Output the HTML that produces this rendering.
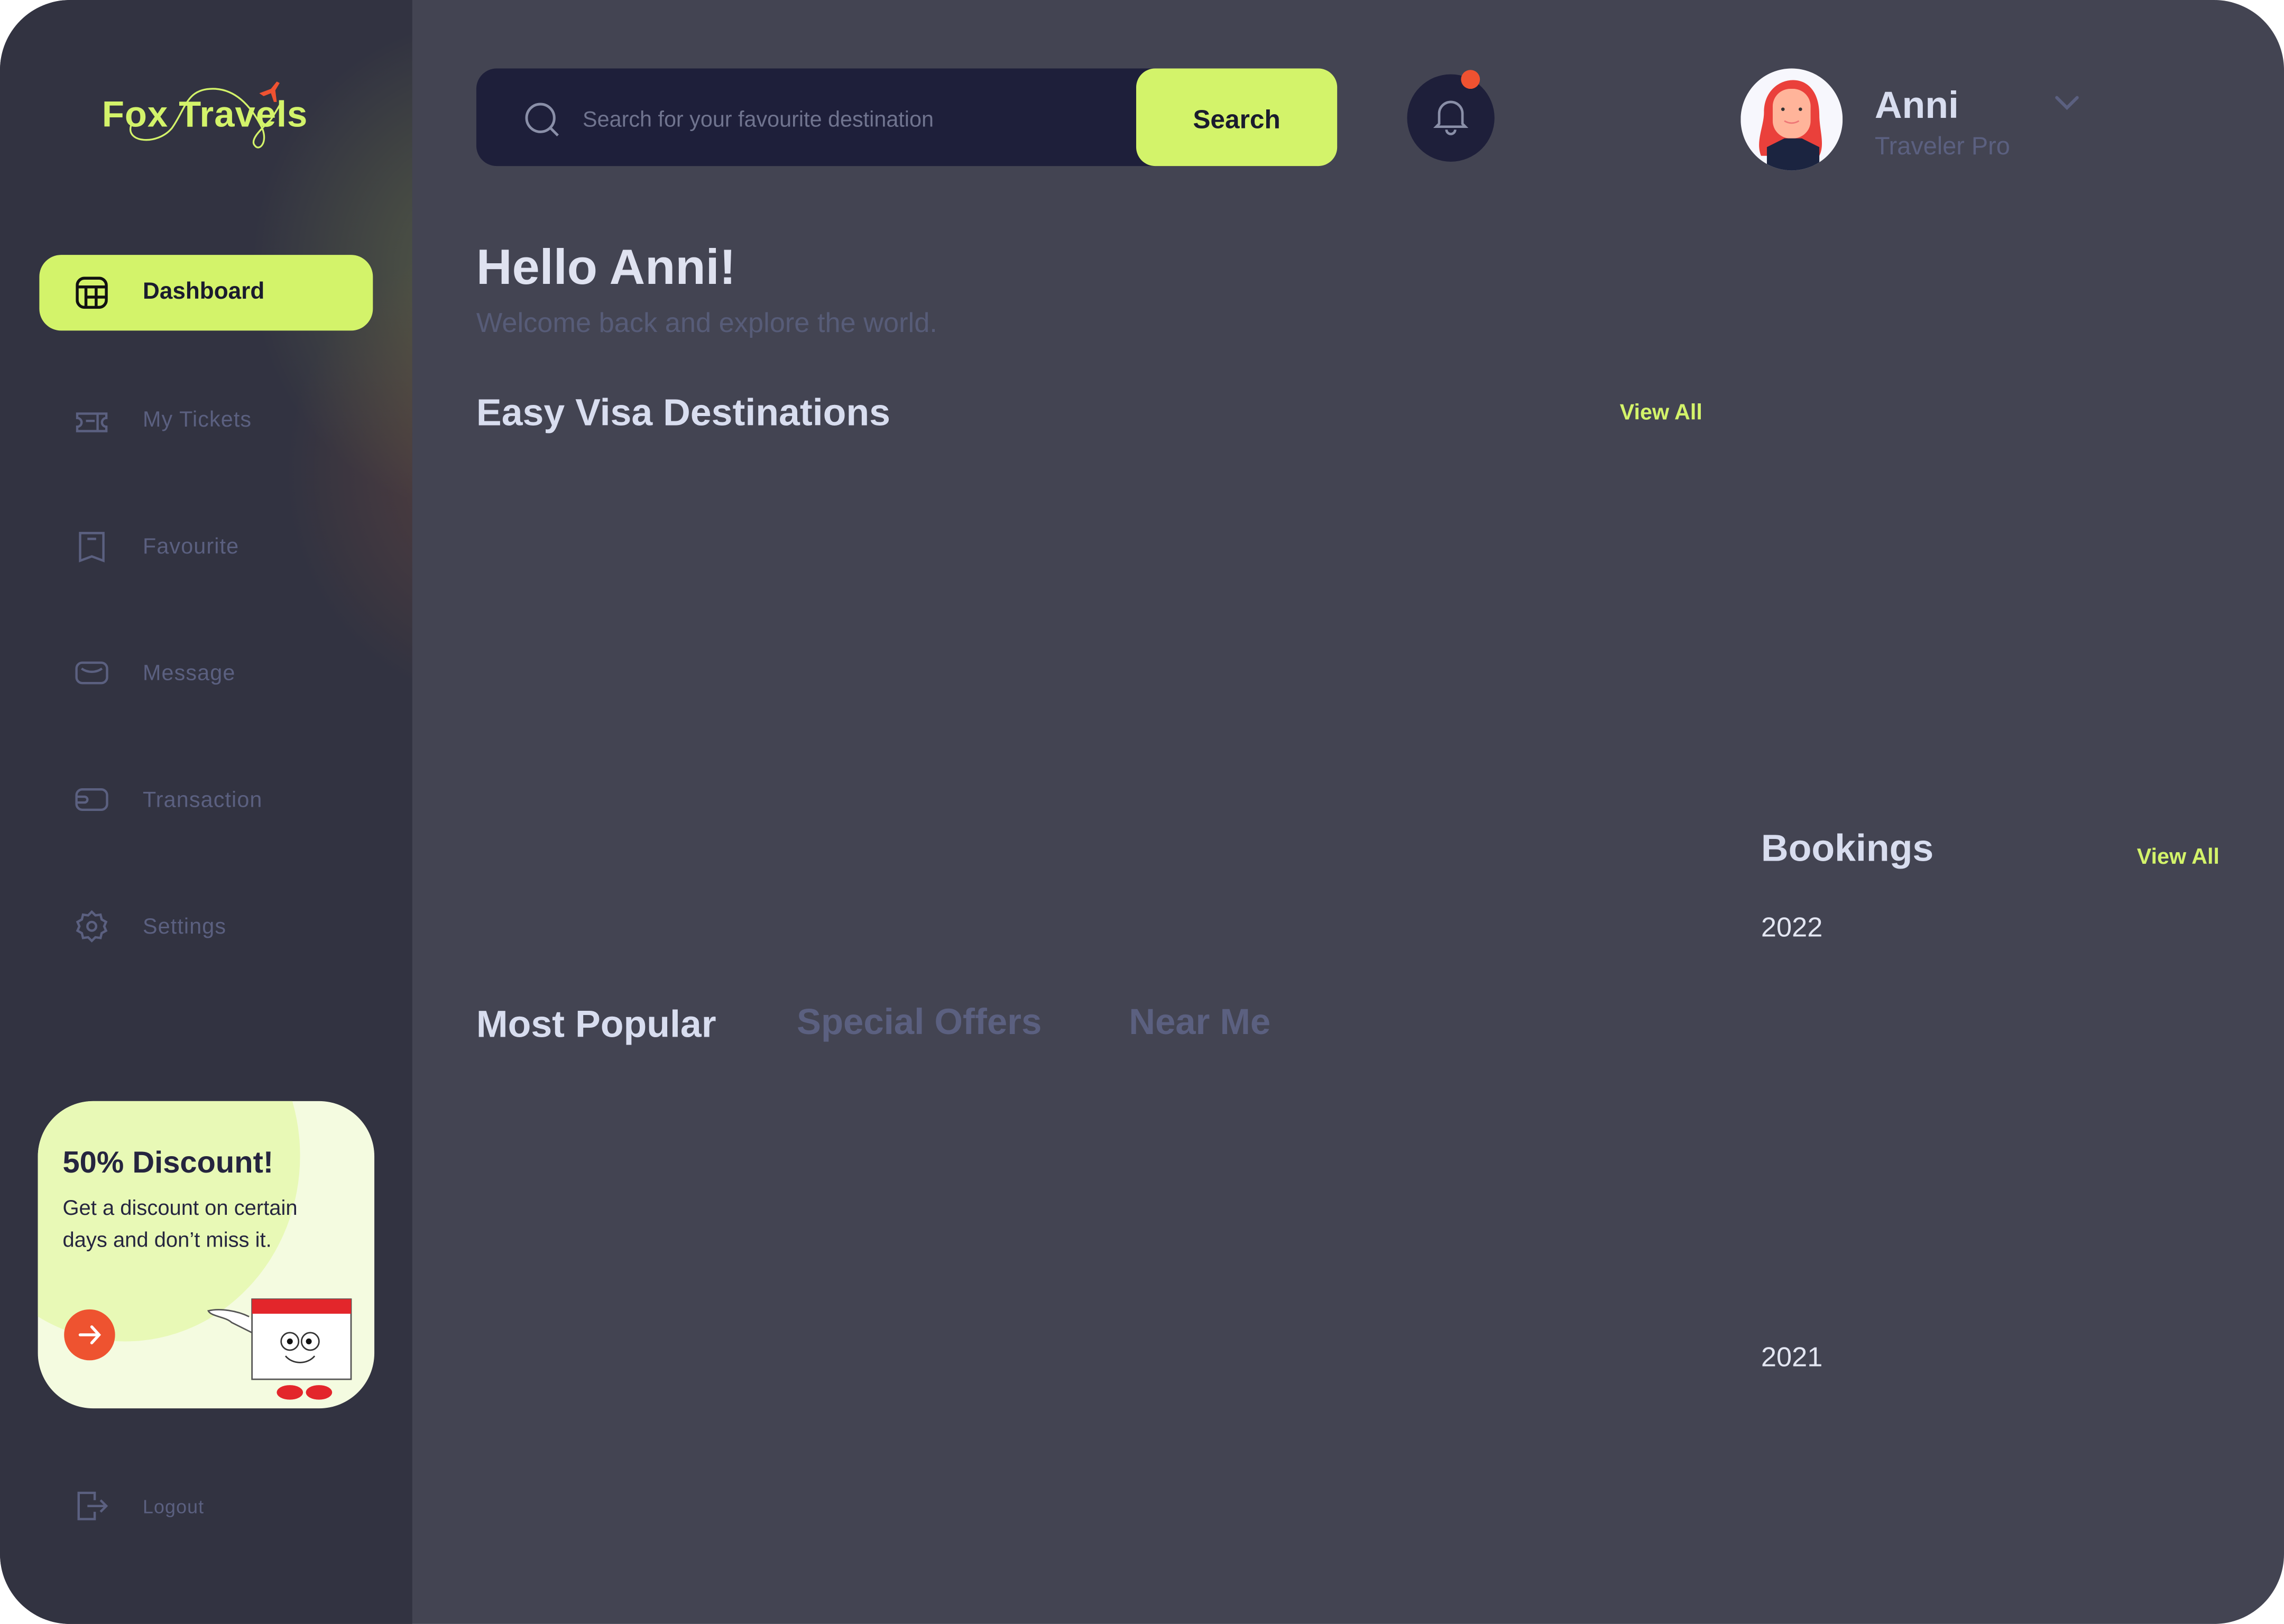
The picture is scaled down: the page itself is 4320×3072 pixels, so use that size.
<!DOCTYPE html>
<html><head><meta charset="utf-8"><style>
html,body{margin:0;padding:0;background:#fff;width:4320px;height:3072px;overflow:hidden}
#s{position:absolute;left:0;top:0;width:1568px;height:1115px;transform:scale(2.75510);transform-origin:0 0;font-family:"Liberation Sans",sans-serif}
.app{position:absolute;left:0;top:0;width:1568px;height:1115px;border-radius:48px;overflow:hidden;background:#434452}
.side{position:absolute;left:0;top:0;width:283px;height:1115px;background:#323341;overflow:hidden}
.glow{position:absolute;left:60px;top:-60px;width:440px;height:640px;background:radial-gradient(ellipse 160px 170px at 62% 38%,rgba(180,200,80,.26),rgba(0,0,0,0)),radial-gradient(ellipse 150px 160px at 65% 60%,rgba(200,100,50,.24),rgba(0,0,0,0))}
.t{position:absolute;white-space:nowrap}
.mi{position:absolute;left:98px;font-size:15px;color:#5b6080;letter-spacing:.4px}
.ic{position:absolute;left:51px;width:24px;height:24px}
</style></head><body><div id="s"><div class="app">
<div class="side"><div class="glow"></div>
<svg style="position:absolute;left:68px;top:56px" width="160" height="50" viewBox="0 0 160 50">
<path d="M22 30 C18 42 40 44 50 32 C60 18 60 4 80 5 C95 6 105 18 112 32 C116 42 110 48 107 44 C103 40 112 32 118 26 C122 20 124 16 126 13" fill="none" stroke="#d3f36a" stroke-width="1.2"/>
<text x="2" y="31" font-family="Liberation Sans" font-weight="700" font-size="25" textLength="141" fill="#d3f36a">Fox Travels</text>
<path d="M110 8 l8 -3 l4 -5 l2 1 l-3 5 l1 8 l-2 0 l-2 -6 l-5 2 z" fill="#ef5231"/>
</svg>
<div style="position:absolute;left:27px;top:175px;width:229px;height:52px;background:#d3f36a;border-radius:15px"></div>
<svg style="position:absolute;left:52px;top:190px" width="22" height="22" viewBox="0 0 22 22" fill="none" stroke="#111" stroke-width="2"><rect x="1" y="1" width="20" height="20" rx="5"/><path d="M1 7h20M7 7v14M14 7v14M7 14h14"/></svg>
<div class="t" style="left:98px;top:192px;font-size:16px;font-weight:700;color:#1a1b2e">Dashboard</div>
<svg class="ic" style="top:278px" viewBox="0 0 24 24" fill="none" stroke="#5b6080" stroke-width="1.6"><path d="M2 6h20v3a3 3 0 0 0 0 6v3H2v-3a3 3 0 0 0 0-6zM8 11h6M16 6v12"/></svg>
<div class="mi" style="top:280px">My Tickets</div>
<svg class="ic" style="top:363px" viewBox="0 0 24 24" fill="none" stroke="#5b6080" stroke-width="1.6"><path d="M4 3h16v19l-8-3-8 3zM9 7h6"/></svg>
<div class="mi" style="top:367px">Favourite</div>
<svg class="ic" style="top:450px" viewBox="0 0 24 24" fill="none" stroke="#5b6080" stroke-width="1.6"><rect x="1.5" y="5" width="21" height="14" rx="4"/><path d="M5 9c4 3 10 3 14 0"/></svg>
<div class="mi" style="top:454px">Message</div>
<svg class="ic" style="top:537px" viewBox="0 0 24 24" fill="none" stroke="#5b6080" stroke-width="1.6"><rect x="1.5" y="5" width="21" height="14" rx="4"/><path d="M2 10h5a2 2 0 0 1 0 4H2"/></svg>
<div class="mi" style="top:541px">Transaction</div>
<svg class="ic" style="top:624px" viewBox="0 0 24 24" fill="none" stroke="#5b6080" stroke-width="1.6"><circle cx="12" cy="12" r="3"/><path d="M12 2l2.5 2.5 3.5-.5.8 3.3 3 1.7-1.3 3 1.3 3-3 1.7-.8 3.3-3.5-.5L12 22l-2.5-2.5-3.5.5-.8-3.3-3-1.7 1.3-3-1.3-3 3-1.7.8-3.3 3.5.5z"/></svg>
<div class="mi" style="top:628px">Settings</div>
<div style="position:absolute;left:26px;top:756px;width:231px;height:211px;border-radius:38px;background:#f4fbe0;overflow:hidden">
<div style="position:absolute;left:-60px;top:-90px;width:240px;height:255px;border-radius:50%;background:#e8f9b6"></div>
<div class="t" style="left:17px;top:31px;font-size:21px;font-weight:700;color:#25253f">50% Discount!</div>
<div style="position:absolute;left:17px;top:63px;font-size:14.5px;line-height:22px;color:#25253f;width:180px">Get a discount on certain days and don’t miss it.</div>
<div style="position:absolute;left:18px;top:143px;width:35px;height:35px;border-radius:50%;background:#ee5330"></div>
<svg style="position:absolute;left:26px;top:151px" width="19" height="19" viewBox="0 0 19 19" fill="none" stroke="#fff" stroke-width="2" stroke-linecap="round"><path d="M3 9.5h13M11 4l5 5.5-5 5.5"/></svg>
<svg style="position:absolute;left:115px;top:128px" width="115" height="82" viewBox="0 0 115 82">
<path d="M30 20c-8-4-20-6-28-4 2 4 12 4 16 8l20 10" fill="#fff" stroke="#555" stroke-width="1"/>
<rect x="32" y="8" width="68" height="55" fill="#fff" stroke="#555" stroke-width="1"/>
<rect x="32" y="8" width="68" height="10" fill="#e3262b"/>
<circle cx="58" cy="37" r="6" fill="#fff" stroke="#333"/><circle cx="72" cy="37" r="6" fill="#fff" stroke="#333"/>
<circle cx="58" cy="37" r="2" fill="#111"/><circle cx="71" cy="37" r="2" fill="#111"/>
<path d="M55 47c5 6 15 6 20 0" fill="none" stroke="#333"/>
<ellipse cx="58" cy="72" rx="9" ry="5" fill="#e3262b"/><ellipse cx="78" cy="72" rx="9" ry="5" fill="#e3262b"/>
</svg>
</div>
<svg class="ic" style="top:1022px" viewBox="0 0 24 24" fill="none" stroke="#5b6080" stroke-width="1.6"><path d="M14 8V3H3v18h11v-5M9 12h13M18 8l4 4-4 4"/></svg>
<div class="mi" style="top:1027px;font-size:13px">Logout</div>
</div>
<div style="position:absolute;left:327px;top:47px;width:591px;height:67px;border-radius:14px;background:#1e1f3a"></div>
<svg style="position:absolute;left:359px;top:69px" width="26" height="26" viewBox="0 0 26 26" fill="none" stroke="#8a8fa8" stroke-width="1.8"><circle cx="12" cy="12" r="9.5"/><path d="M19 19l5 5"/></svg>
<div class="t" style="left:400px;top:74px;font-size:15px;color:#70748f">Search for your favourite destination</div>
<div style="position:absolute;left:780px;top:47px;width:138px;height:67px;border-radius:13px;background:#d3f36a"></div>
<div class="t" style="left:780px;width:138px;text-align:center;top:72px;font-size:18px;font-weight:700;color:#1a1b2e">Search</div>
<div style="position:absolute;left:966px;top:51px;width:60px;height:60px;border-radius:50%;background:#1e1f3a"></div>
<svg style="position:absolute;left:984px;top:67px" width="24" height="26" viewBox="0 0 24 26" fill="none" stroke="#8a8fa8" stroke-width="1.7"><path d="M4 18V11a8 8 0 0 1 16 0v7l2 2H2zM9 22a3 3 0 0 0 6 0"/></svg>
<div style="position:absolute;left:1003px;top:48px;width:13px;height:13px;border-radius:50%;background:#ef5231"></div>
<svg style="position:absolute;left:1195px;top:47px" width="70" height="70" viewBox="0 0 70 70"><defs><clipPath id="c"><ellipse cx="35" cy="35" rx="35" ry="35"/></clipPath></defs><g clip-path="url(#c)"><rect width="70" height="70" fill="#f7f7fd"/><path d="M14 60c-4-10 2-20 2-30 0-14 10-22 20-22s18 8 18 24c0 10 4 20 0 28z" fill="#ea403b"/><rect x="22" y="14" width="26" height="34" rx="12" fill="#ffb49a"/><path d="M18 54l12-6h12l12 6v20H18z" fill="#1b2440"/><circle cx="29" cy="28" r="1.2" fill="#333"/><circle cx="41" cy="28" r="1.2" fill="#333"/><path d="M30 36q5 3 10 0" stroke="#e77" fill="none"/></g></svg>
<div class="t" style="left:1287px;top:57px;font-size:26px;font-weight:700;color:#d8ddef">Anni</div>
<div class="t" style="left:1287px;top:91px;font-size:17px;color:#5b6080">Traveler Pro</div>
<svg style="position:absolute;left:1409px;top:64px" width="20" height="14" viewBox="0 0 20 14" fill="none" stroke="#5b6080" stroke-width="2.2" stroke-linecap="round"><path d="M3 3l7 7 7-7"/></svg>
<div class="t" style="left:327px;top:165px;font-size:34px;font-weight:700;color:#dfe2f0">Hello Anni!</div>
<div class="t" style="left:327px;top:212px;font-size:19px;color:#575c78">Welcome back and explore the world.</div>
<div class="t" style="left:327px;top:268px;font-size:26px;font-weight:700;color:#d8ddef">Easy Visa Destinations</div>
<div class="t" style="left:1112px;top:275px;font-size:15px;font-weight:700;color:#d3f36a">View All</div>
<div class="t" style="left:1209px;top:567px;font-size:26px;font-weight:700;color:#d8ddef">Bookings</div>
<div class="t" style="left:1467px;top:580px;font-size:15px;font-weight:700;color:#d3f36a">View All</div>
<div class="t" style="left:1209px;top:627px;font-size:19px;color:#e3e6f2">2022</div>
<div class="t" style="left:1209px;top:922px;font-size:19px;color:#e3e6f2">2021</div>
<div class="t" style="left:327px;top:688px;font-size:26px;font-weight:700;color:#d8ddef">Most Popular</div>
<div class="t" style="left:547px;top:688px;font-size:25px;font-weight:700;color:#5b6080">Special Offers</div>
<div class="t" style="left:775px;top:688px;font-size:25px;font-weight:700;color:#5b6080">Near Me</div>
</div></div></body></html>
